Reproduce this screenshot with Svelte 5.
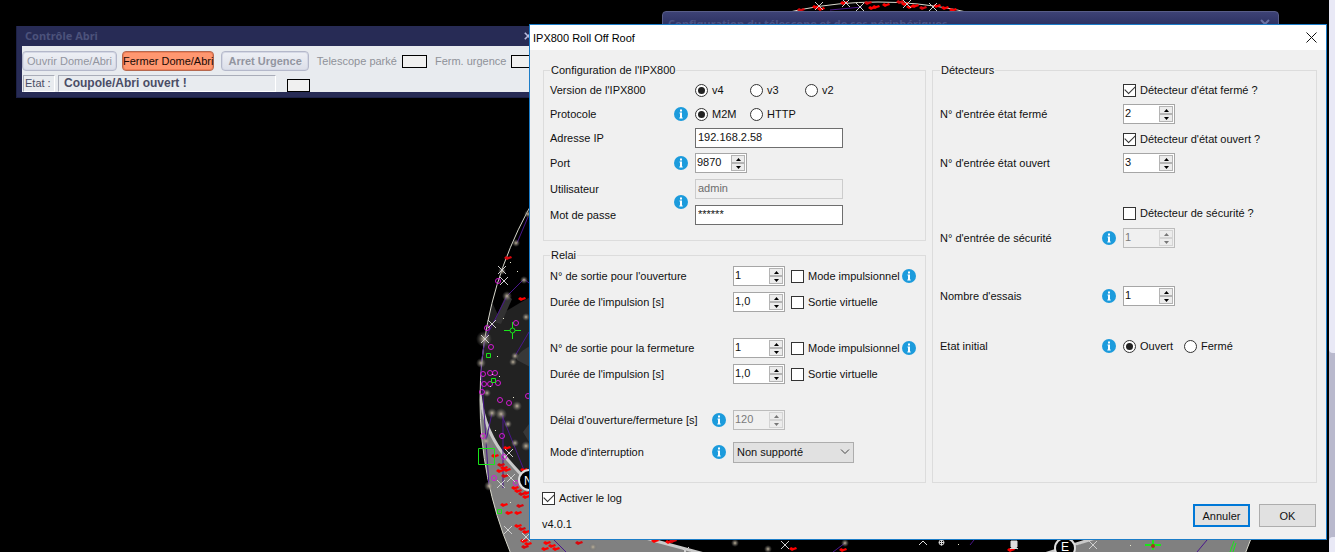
<script>
  let version = $state('v4');
  let protocol = $state('M2M');
  let initial = $state('Ouvert');
  let mode = $state('Non supporté');

  const crosses = [
    [502, 270], [504, 281], [492, 324], [485, 339], [509, 453], [501, 484], [511, 478],
    [508, 530], [526, 537], [819, 6], [846, 3], [860, 7], [907, 4], [933, 7], [685, 551], [785, 545], [1093, 545]
  ];
  const rings = [
    [498, 281], [487, 328], [516, 323], [491, 347], [483, 374], [490, 373], [495, 373], [484, 384], [490, 384],
    [498, 383], [482, 392], [500, 400], [509, 403], [483, 436], [502, 436], [504, 457], [494, 478], [516, 483], [528, 396]
  ];
  const reds = [
    [507, 258], [521, 299], [506, 448], [494, 456], [500, 465], [503, 468], [499, 471], [506, 470], [504, 476],
    [523, 470], [514, 488], [517, 491], [521, 494], [525, 497], [526, 493], [503, 505], [519, 506], [508, 513],
    [517, 513], [517, 526], [521, 529], [525, 532], [523, 541], [527, 544], [524, 547], [546, 543], [551, 546],
    [544, 549], [578, 543], [555, 549], [654, 541], [668, 542], [672, 541], [792, 549], [842, 550], [1010, 550], [800, 10],
    [815, 7], [820, 9], [843, 3], [867, 3], [875, 7], [871, 8], [885, 5], [899, 2], [904, 4], [909, 7], [914, 6], [922, 8],
    [936, 6], [944, 8], [952, 10]
  ];
  const stars = [
    [528, 214, 2], [516, 243, 2], [502, 271, 2], [524, 280, 2], [507, 296, 3], [526, 317, 2], [484, 339, 6],
    [481, 363, 3], [515, 356, 2], [513, 362, 2], [487, 393, 2], [517, 406, 3], [492, 413, 3], [501, 414, 4],
    [508, 424, 2], [515, 443, 2], [486, 441, 3], [489, 486, 3], [526, 446, 3], [845, 543, 2], [768, 549, 2],
    [593, 547, 2], [735, 543, 2]
  ];
  const detail = [[503, 318], [492, 374], [499, 376], [518, 330], [510, 262], [517, 271], [497, 356], [490, 386], [513, 397], [495, 430], [510, 502], [958, 544], [1130, 545]];
</script>

{#snippet info(name)}
  <button class="info" type="button" aria-label={name}>
    <svg viewBox="0 0 14 14" aria-hidden="true">
      <circle cx="7" cy="7" r="7" fill="#1c9bdc" />
      <path d="M6 2.500h2v2H6zM5.500 5.500H8v5h.7v1H5.300v-1H6v-4h-.5z" fill="#fff" />
    </svg>
  </button>
{/snippet}

{#snippet spin(id, value, disabled = false)}
  <span class="spin" class:off={disabled}>
    <input {id} type="text" inputmode="decimal" {value} {disabled} />
    <span class="arrows">
      <button type="button" tabindex="-1" aria-label="+" {disabled}><svg viewBox="0 0 5 3"><path d="M0 3L2.500 0 5 3z" /></svg></button>
      <button type="button" tabindex="-1" aria-label="-" {disabled}><svg viewBox="0 0 5 3"><path d="M0 0h5L2.500 3z" /></svg></button>
    </span>
  </span>
{/snippet}

{#snippet check(text, checked = false)}
  <label class="choice"><input type="checkbox" {checked} /><span>{text}</span></label>
{/snippet}

<main class="desktop">
  <svg class="sky" viewBox="0 0 1335 552" preserveAspectRatio="xMinYMin slice" aria-hidden="true">
    <defs>
      <clipPath id="globe"><circle cx="878" cy="400" r="398" /></clipPath>
      <radialGradient id="glow"><stop offset="0" stop-color="#c0b49c" /><stop offset="1" stop-color="#666" stop-opacity="0" /></radialGradient>
    </defs>
    <g clip-path="url(#globe)">
      <path d="M480 330L492 302 498 315 508 310 518 304 532 296V500H480z" fill="#222" />
      <path d="M532 345q-16 8-15 15l15 8zM532 420l-9 12 9 15z" fill="#383838" />
      <path d="M494 322l12-27 6 4-11 25z" fill="#333" />
      <path d="M478 394Q484 432 508 460T532 480Q580 515 656 541L720 560H470zM1040 560L1100 536H1260V560z" fill="#808080" />
      <path d="M480 394Q484 432 508 460T532 480M612 528L656 541 712 556M1038 556L1108 534" fill="none" stroke="#c9c9c9" stroke-width="3" />
    </g>
    <circle cx="878" cy="400" r="398" fill="none" stroke="#d8d8cc" />
    <g fill="none" stroke="#4a168c">
      <path d="M528 217L517 243M529 283L524 279 507 296 485 339 481 365 486 441 489 486M529 332L515 356M501 413L528 480M503 415L503 488M492 413L486 441" />
      <path d="M554 540L566 552M833 552L845 543M974 540L970 545M1207 540L1197 552M830 10L862 7" />
    </g>
    {#each stars as [x, y, r]}<circle cx={x} cy={y} r={r + 2} fill="url(#glow)" />{/each}
    {#each reds as [x, y], i}
      <path d="M{x - 3} {y}l2-2 2 1 3-1 1 2-3 1-2 1z" fill={i % 4 ? '#f00' : '#d9060c'} />
    {/each}
    {#each rings as [x, y]}<circle cx={x} cy={y} r="2.500" fill="none" stroke="#d31bd3" />{/each}
    {#each crosses as [x, y]}
      <path d="M{x - 4} {y - 4}l8 8m0-8l-8 8" stroke="#cfcfcf" fill="none" />
    {/each}
    {#each detail as [x, y]}<path d="M{x} {y}h1v1h-1z" fill="#e8e8d0" />{/each}
    <g fill="none" stroke="#19e619">
      <path d="M478.500 448.500h16v16h-16zM486.500 353.500h4v4h-4zM491.500 378.500h4v4h-4zM497.500 509.500h4v4h-4z" />
      <path d="M504 330.500h6m5 0h6M512.500 322v6m0 5v6" />
      <circle cx="512.500" cy="330.500" r="2.500" />
      <path d="M1230 552l4-11M1233 552l3-9" />
    </g>
    <path d="M1145 545h16M1153 540v10" stroke="#19e619" stroke-width="2" />
    <circle cx="1153" cy="546" r="2" fill="#a33b16" />
    <path d="M1011 541h6v6h-6zM1010 549l4-3 4 3" fill="#ddd" stroke="#ddd" />
    <circle cx="941.500" cy="542.500" r="2.500" stroke="#ddd" fill="none" />
    <path d="M939 542.500h5m-2.500-3v6M919 545l4-4 4 4" stroke="#ddd" fill="none" />
    <circle cx="529" cy="480" r="10" stroke="#ddd" stroke-width="2" />
    <circle cx="1065" cy="548" r="10" stroke="#ddd" stroke-width="2" />
    <text x="524" y="485" class="cardinal">N</text>
    <text x="1061" y="551" class="cardinal">E</text>
  </svg>

  <aside class="rail" aria-hidden="true"><span></span><span></span></aside>

  <section class="scope" aria-label="Configuration du télescope et de ses périphériques">
    <span>Configuration du télescope et de ses périphériques</span>
    <svg viewBox="0 0 10 10" aria-hidden="true"><path d="M1 1l8 8M9 1L1 9" stroke="#6c73a4" stroke-width="2" /></svg>
  </section>

  <section class="abri">
    <header><h2>Contrôle Abri</h2><button type="button" aria-label="Fermer"><svg viewBox="0 0 10 10"><path d="M1 1l8 8M9 1L1 9" stroke="#b9bde0" stroke-width="2" /></svg></button></header>
    <div class="abri-body">
      <div class="abri-row actions">
        <button type="button" disabled>Ouvrir Dome/Abri</button>
        <button type="button" class="hot">Fermer Dome/Abri</button>
        <button type="button" class="strong" disabled>Arret Urgence</button>
        <span class="lamp-label">Telescope parké <i class="lamp"></i></span>
        <span class="lamp-label">Ferm. urgence <i class="lamp"></i></span>
      </div>
      <div class="abri-row state">
        <span class="sunken">Etat :</span>
        <output class="sunken wide">Coupole/Abri ouvert !</output>
        <i class="lamp"></i>
      </div>
    </div>
  </section>

  <form class="dialog" aria-labelledby="title" onsubmit={(e) => e.preventDefault()}>
    <header>
      <h1 id="title">IPX800 Roll Off Roof</h1>
      <button type="button" aria-label="Fermer"><svg viewBox="0 0 11 11"><path d="M.5.5l10 10M10.500.5l-10 10" stroke="#111" fill="none" /></svg></button>
    </header>

    <div class="columns">
      <div class="left">
        <fieldset>
          <legend>Configuration de l'IPX800</legend>
          <div class="grid config">
            <span>Version de l'IPX800</span>
            <div class="field options">
              {#each ['v4', 'v3', 'v2'] as v}
                <label class="choice"><input type="radio" name="version" value={v} bind:group={version} /><span>{v}</span></label>
              {/each}
            </div>
            <span>Protocole</span>{@render info('Info protocole')}
            <div class="field options">
              {#each ['M2M', 'HTTP'] as p}
                <label class="choice"><input type="radio" name="protocol" value={p} bind:group={protocol} /><span>{p}</span></label>
              {/each}
            </div>
            <label for="ip">Adresse IP</label>
            <input class="field text" id="ip" type="text" value="192.168.2.58" />
            <label for="port">Port</label>{@render info('Info port')}
            <div class="field">{@render spin('port', '9870')}</div>
            <label for="user">Utilisateur</label>
            <div class="both">{@render info('Info identifiants')}</div>
            <input class="field text" id="user" type="text" value="admin" disabled />
            <label for="pass">Mot de passe</label>
            <input class="field text" id="pass" type="text" autocomplete="off" value="******" />
          </div>
        </fieldset>

        <fieldset>
          <legend>Relai</legend>
          <div class="grid relay">
            <label for="open">N° de sortie pour l'ouverture</label>
            <div class="field pair">{@render spin('open', '1')}<span class="pulse">{@render check('Mode impulsionnel')}{@render info('Info mode impulsionnel')}</span></div>
            <label for="open-time">Durée de l'impulsion [s]</label>
            <div class="field pair">{@render spin('open-time', '1,0')}{@render check('Sortie virtuelle')}</div>
            <label for="close">N° de sortie pour la fermeture</label>
            <div class="field pair">{@render spin('close', '1')}<span class="pulse">{@render check('Mode impulsionnel')}{@render info('Info mode impulsionnel')}</span></div>
            <label for="close-time">Durée de l'impulsion [s]</label>
            <div class="field pair">{@render spin('close-time', '1,0')}{@render check('Sortie virtuelle')}</div>
            <label for="delay">Délai d'ouverture/fermeture [s]</label>{@render info('Info délai')}
            <div class="field">{@render spin('delay', '120', true)}</div>
            <label for="mode">Mode d'interruption</label>{@render info('Info interruption')}
            <div class="field select">
              <select id="mode" bind:value={mode}><option>Non supporté</option></select>
              <svg viewBox="0 0 10 6" aria-hidden="true"><path d="M1 .5l4 4 4-4" fill="none" stroke="#444" /></svg>
            </div>
          </div>
        </fieldset>
      </div>

      <fieldset class="right">
        <legend>Détecteurs</legend>
        <div class="grid sensors">
          <div class="field">{@render check("Détecteur d'état fermé ?", true)}</div>
          <label for="closed">N° d'entrée état fermé</label>
          <div class="field">{@render spin('closed', '2')}</div>
          <div class="field">{@render check("Détecteur d'état ouvert ?", true)}</div>
          <label for="opened">N° d'entrée état ouvert</label>
          <div class="field">{@render spin('opened', '3')}</div>
          <div class="field">{@render check('Détecteur de sécurité ?')}</div>
          <label for="safety">N° d'entrée de sécurité</label>{@render info('Info sécurité')}
          <div class="field">{@render spin('safety', '1', true)}</div>
          <label for="tries">Nombre d'essais</label>{@render info('Info essais')}
          <div class="field">{@render spin('tries', '1')}</div>
          <span>Etat initial</span>{@render info('Info état initial')}
          <div class="field initial">
            {#each ['Ouvert', 'Fermé'] as s}
              <label class="choice"><input type="radio" name="initial" value={s} bind:group={initial} /><span>{s}</span></label>
            {/each}
          </div>
        </div>
      </fieldset>
    </div>

    <footer>
      <div class="meta">{@render check('Activer le log', true)}<span>v4.0.1</span></div>
      <div class="buttons"><button type="button" class="default">Annuler</button><button type="submit">OK</button></div>
    </footer>
  </form>
</main>

<style>
  :global(body) { background: #000; }
  .desktop, .desktop * { box-sizing: border-box; }
  .desktop {
    position: relative; min-height: 100vh; overflow: hidden; background: #000; color: #111;
    font: 11px/14px "Liberation Sans", Arial, sans-serif;
  }
  button, input, select { font: inherit; color: inherit; margin: 0; }
  h1, h2 { margin: 0; font: inherit; }
  svg { display: block; }

  .sky { position: absolute; inset: 0; width: 100%; height: 100%; }
  .cardinal { font: 12px "Liberation Sans", sans-serif; fill: #fff; }

  .rail { position: absolute; top: 0; right: 0; bottom: 0; width: 6px; display: flex; flex-direction: column; background: #b9b9cd; }
  .rail span { background: #e9e9f6; border-radius: 0 0 0 4px; }
  .rail span:first-child { flex: 0 0 353px; }
  .rail span:last-child { margin-top: auto; height: 15px; border-radius: 4px 0 0; }

  .scope {
    position: absolute; top: 11px; left: 662px; right: 56px; height: 32px; padding: 5px 8px 0 5px;
    display: flex; justify-content: space-between; border: 1px solid #585d88; border-radius: 4px 4px 0 0;
    background: linear-gradient(#3d4275, #2b3061 14px); color: #4b5183; font: bold 11px/14px "Noto Sans", sans-serif;
  }
  .scope svg { width: 10px; height: 10px; margin-top: 2px; }

  .abri { position: absolute; top: 26px; left: 16px; width: 524px; padding: 0 5px 5px; background: #272b55; border: 1px solid #1c2045; border-top: 0; }
  .abri header { display: flex; justify-content: space-between; align-items: center; height: 20px; padding: 0 0 0 3px; }
  .abri h2 { color: #4c527b; font: bold 11px/14px "Noto Sans", sans-serif; }
  .abri header button { width: 10px; height: 10px; padding: 0; border: 0; background: none; }
  .abri header svg { width: 8px; height: 8px; }
  .abri-body { background: #e8ebef; height: 46px; padding: 5px 0 0; overflow: hidden; }
  .abri-row { display: flex; align-items: center; }
  .actions { gap: 5px; color: #8f9299; }
  .actions button {
    height: 20px; padding: 0 4px; white-space: nowrap; border: 1px solid #b4b8ca; border-radius: 4px; color: #9295a0;
    background: linear-gradient(#eef0f5, #dcdfe9); box-shadow: inset 0 0 0 1px #d5d8e5;
  }
  .actions .hot { padding: 0; border-color: #b5684f; background: #ff9770; color: #200a05; box-shadow: inset 0 0 0 1px #f08058; }
  .actions .strong { font-weight: bold; margin-left: 2px; padding: 0 6px; }
  .lamp-label { display: flex; align-items: center; gap: 5px; white-space: nowrap; margin-left: 3px; }
  .lamp { flex: none; width: 25px; height: 13px; border: 1px solid #000; background: #f0f0f0; }
  .state { gap: 3px; padding: 4px 2px 0 1px; align-items: flex-end; color: #4a4d66; }
  .state .lamp { width: 23px; margin-left: 8px; }
  .sunken { height: 17px; width: 32px; padding: 0 1px; line-height: 15px; white-space: nowrap; border: 1px solid; border-color: #a9adb9 #fff #fff #a9adb9; }
  .sunken.wide { width: 218px; padding: 0 5px; font-weight: bold; font-size: 12px; }

  .dialog { position: absolute; top: 24px; left: 529px; right: 8px; background: #f0f0f0; border: 1px solid #1c7dc8; }
  .dialog header { display: flex; align-items: center; justify-content: space-between; height: 25px; padding: 0 9px 0 3px; background: #fff; color: #000; }
  .dialog header button { padding: 0; border: 0; background: none; }
  .dialog header svg { width: 11px; height: 11px; }
  .columns { display: grid; grid-template-columns: 383fr 385fr; gap: 6px; padding: 13px 9px 0 13px; }
  .left { display: flex; flex-direction: column; gap: 7px; }
  fieldset { min-width: 0; margin: 0; padding: 0 7px 11px 6px; border: 1px solid #dcdcdc; }
  .right { padding-left: 7px; }
  legend { height: 14px; padding: 0 1px; margin: 0; }

  .grid { display: grid; }
  .grid > label, .grid > span { grid-column: 1; white-space: nowrap; }
  .grid > .info { grid-column: 2; }
  .field { grid-column: 3; display: flex; align-items: center; }
  .both { grid-column: 2; grid-row: 5 / span 2; }
  .config { grid-template-columns: 124px 21px 1fr; grid-template-rows: repeat(3, 24px) repeat(3, 26px); padding-top: 1px; padding-bottom: 1px; align-items: center; }
  .relay { grid-template-columns: 162px 21px 1fr; grid-template-rows: 26px 46px 26px 46px 32px 26px; padding: 1px 0 6px; align-items: start; }
  .relay > * { min-height: 26px; }
  .relay > label { line-height: 26px; }
  .sensors { grid-template-columns: 162px 21px 1fr; grid-template-rows: 24px 25px 24px 50px 25px 58px 50px 26px; padding-top: 1px; align-items: start; }
  .sensors > * { min-height: 24px; }
  .sensors > label, .sensors > span { line-height: 24px; }

  .info { display: flex; align-items: center; width: 14px; height: 14px; padding: 0; border: 0; background: none; }
  .info svg { width: 14px; height: 14px; }
  .options .choice { width: 55px; }
  .initial { gap: 11px; }
  .choice { display: flex; align-items: center; gap: 4px; white-space: nowrap; }
  .choice input {
    appearance: none; flex: none; display: grid; place-items: center; width: 13px; height: 13px;
    border: 1px solid #333; background: #fff;
  }
  .choice input[type="radio"] { border-radius: 50%; }
  .choice input[type="radio"]:checked::before { content: ""; width: 7px; height: 7px; border-radius: 50%; background: #222; }
  .choice input[type="checkbox"]:checked::before {
    content: ""; width: 9px; height: 5px; border: solid #333; border-width: 0 0 1px 1px; transform: rotate(-45deg) translate(1px, -1px);
  }
  .text { width: 148px; height: 20px; padding: 0 2px 2px; border: 1px solid #6e6e6e; background: #fff; }
  .text:disabled { background: #f0f0f0; border-color: #ccc; color: #6d6d6d; }
  .spin { display: flex; flex: none; width: 52px; height: 20px; padding: 1px; border: 1px solid #a6a6a6; background: #fff; }
  .spin input { flex: 1; min-width: 0; width: 0; padding: 0 0 2px; border: 0; background: none; outline: 0; }
  .arrows { display: flex; flex-direction: column; width: 14px; }
  .arrows button { flex: 1; display: grid; place-items: center; min-height: 0; padding: 0; border: 1px solid #b4b4b4; background: #ececec; }
  .arrows svg { width: 5px; height: 3px; }
  .off { background: #f0f0f0; color: #7a7a7a; border-color: #bcbcbc; }
  .off button { border-color: #d4d4d4; fill: #777; }
  .pair { gap: 6px; }
  .pulse { display: flex; }
  .pulse .choice { width: 111px; }
  .select { position: relative; width: 121px; }
  .select select { appearance: none; width: 100%; height: 21px; padding: 0 3px; border: 1px solid #adadad; border-radius: 0; background: #e1e1e1; }
  .select svg { position: absolute; right: 4px; top: 10px; width: 10px; height: 6px; pointer-events: none; }

  footer { display: flex; justify-content: space-between; padding: 8px 10px 8px 12px; }
  .meta { display: flex; flex-direction: column; gap: 12px; }
  .buttons { display: flex; gap: 9px; align-self: flex-end; padding-bottom: 4px; }
  .buttons button { width: 57px; height: 23px; padding: 0; border: 1px solid #adadad; background: #e1e1e1; font-size: 11px; }
  .buttons .default { border: 2px solid #0078d7; }
</style>
